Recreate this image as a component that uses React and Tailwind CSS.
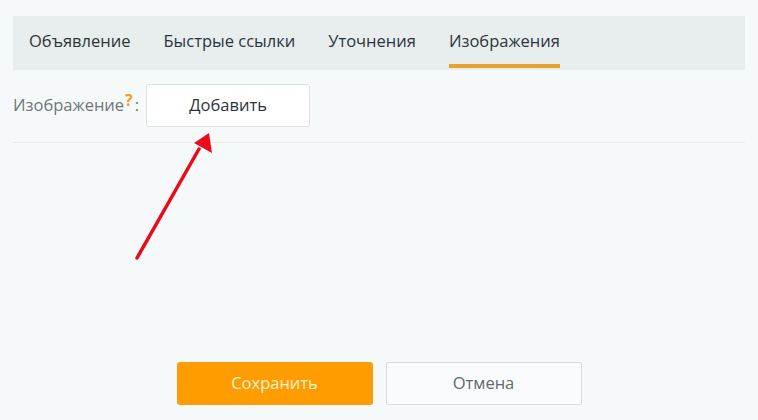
import React from 'react';

const TABS = ['Объявление', 'Быстрые ссылки', 'Уточнения', 'Изображения'];

export default function App() {
  const active = 3;
  return (
    <div className="relative w-[758px] h-[420px] bg-[#f6f9fa] px-[13px] pt-[16px] text-[16.5px]" style={{ fontFamily: '"Open Sans", "DejaVu Sans", sans-serif' }}>
      <div className="flex h-[54px] bg-[#e8edee] pl-[16px] gap-[33px]">
        {TABS.map((t, i) => (
          <div key={t} className="flex flex-col justify-between pt-[14px]">
            <span className="text-[#2b353b] leading-[22px]">{t}</span>
            <div className={i === active ? 'h-[4px] mb-[2px] bg-[#e9a22e]' : 'h-[4px] mb-[2px]'} />
          </div>
        ))}
      </div>

      <div className="flex items-center mt-[14px]">
        <span className="text-[#6f757a]">Изображение</span>
        <span className="text-[#f0a020] font-bold text-[16px] -mt-[12px] ml-[1px]">?</span>
        <span className="text-[#6f757a] ml-[2px]">:</span>
        <button className="ml-[7px] w-[164px] h-[43px] bg-white border border-[#dde2e5] rounded-[2px] text-[#2b353b]">Добавить</button>
      </div>
      <div className="mt-[15px] border-t border-[#e6ebed]" />

      <div className="flex justify-center gap-[13px] mt-[219px]">
        <button className="w-[196px] h-[43px] bg-[#ff9c00] rounded-[3px] text-[#fdf3d6]">Сохранить</button>
        <button className="w-[196px] h-[43px] bg-[#f9fbfc] border border-[#d8dde0] rounded-[2px] text-[#62686c]">Отмена</button>
      </div>

      <svg className="absolute left-0 top-0 pointer-events-none" width="758" height="420">
        <line x1="137" y1="258" x2="199" y2="149" stroke="#ea0a1a" strokeWidth="3.5" strokeLinecap="round" />
        <polygon points="209,133 212,153 194,143" fill="#ea0a1a" />
      </svg>
    </div>
  );
}
